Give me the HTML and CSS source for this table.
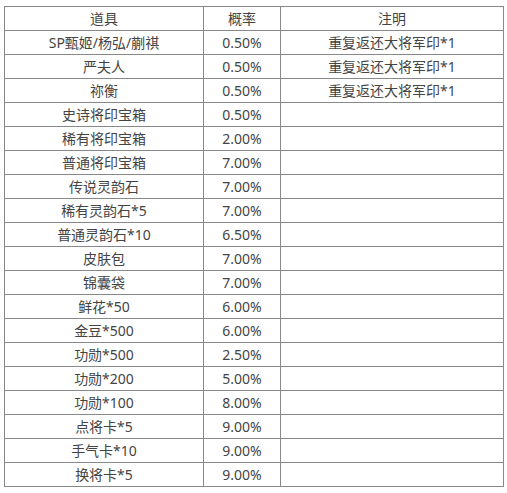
FILE: index.html
```html
<!DOCTYPE html>
<html lang="zh-CN">
<head>
<meta charset="utf-8">
<link rel="stylesheet" href="styles.css">
</head>
<body>
<table class="rates">
  <colgroup>
    <col class="c1"><col class="c2"><col class="c3">
  </colgroup>
  <tr><td>道具</td><td>概率</td><td>注明</td></tr>
  <tr><td>SP甄姬/杨弘/蒯祺</td><td>0.50%</td><td>重复返还大将军印*1</td></tr>
  <tr><td>严夫人</td><td>0.50%</td><td>重复返还大将军印*1</td></tr>
  <tr><td>祢衡</td><td>0.50%</td><td>重复返还大将军印*1</td></tr>
  <tr><td>史诗将印宝箱</td><td>0.50%</td><td></td></tr>
  <tr><td>稀有将印宝箱</td><td>2.00%</td><td></td></tr>
  <tr><td>普通将印宝箱</td><td>7.00%</td><td></td></tr>
  <tr><td>传说灵韵石</td><td>7.00%</td><td></td></tr>
  <tr><td>稀有灵韵石*5</td><td>7.00%</td><td></td></tr>
  <tr><td>普通灵韵石*10</td><td>6.50%</td><td></td></tr>
  <tr><td>皮肤包</td><td>7.00%</td><td></td></tr>
  <tr><td>锦囊袋</td><td>7.00%</td><td></td></tr>
  <tr><td>鲜花*50</td><td>6.00%</td><td></td></tr>
  <tr><td>金豆*500</td><td>6.00%</td><td></td></tr>
  <tr><td>功勋*500</td><td>2.50%</td><td></td></tr>
  <tr><td>功勋*200</td><td>5.00%</td><td></td></tr>
  <tr><td>功勋*100</td><td>8.00%</td><td></td></tr>
  <tr><td>点将卡*5</td><td>9.00%</td><td></td></tr>
  <tr><td>手气卡*10</td><td>9.00%</td><td></td></tr>
  <tr><td>换将卡*5</td><td>9.00%</td><td></td></tr>
</table>
</body>
</html>
```
FILE: styles.css
```css
html, body {
  margin: 0;
  background: #fff;
}
body {
  padding: 6px 0 0 4px;
  font-family: "Noto Sans", "Noto Sans CJK SC", sans-serif;
  font-size: 14px;
  color: #444;
}
.rates {
  border-collapse: collapse;
  table-layout: fixed;
  width: 499px;
}
.c1 { width: 199px; }
.c2 { width: 77px; }
.c3 { width: 223px; }
.rates td {
  border: 1px solid #888;
  padding: 0;
  height: 23px;
  line-height: 23px;
  text-align: center;
  white-space: nowrap;
}
```
